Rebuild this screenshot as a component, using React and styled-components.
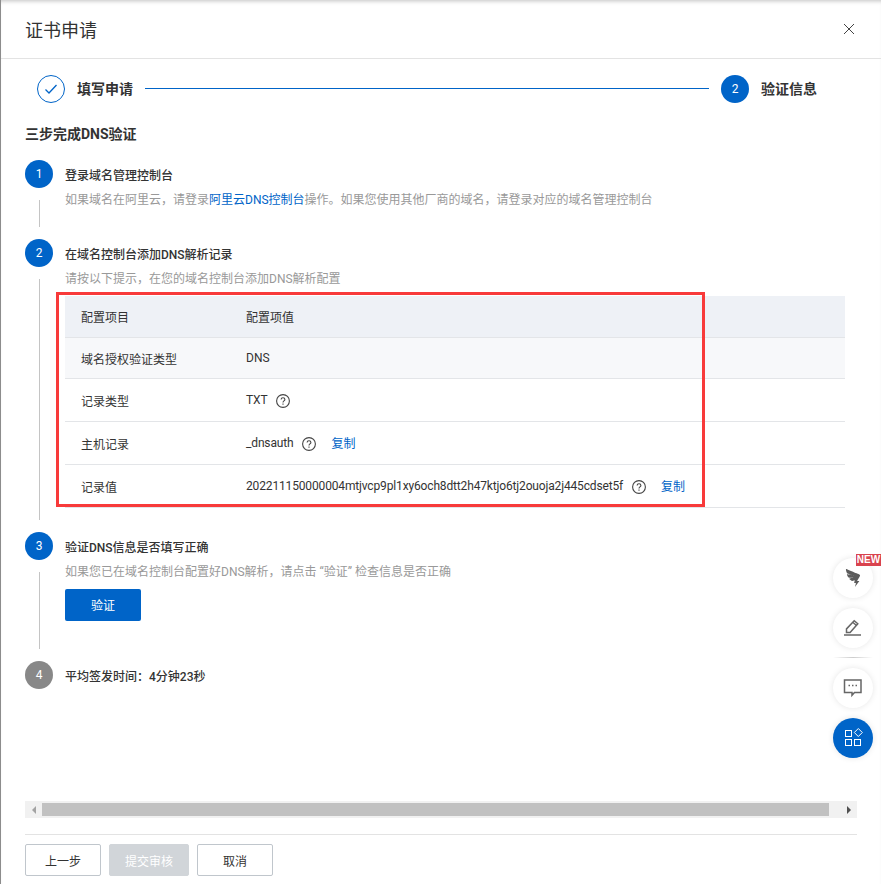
import styled, { createGlobalStyle } from 'styled-components'
import { AiOutlineDingding } from 'react-icons/ai'

const GlobalStyle = createGlobalStyle`
    html, body {
        margin: 0;
        padding: 0;
        background: #fff;
    }
    body {
        font-family: Roboto, 'Noto Sans CJK SC', sans-serif;
        font-size: 12px;
        color: #333;
    }
    * {
        box-sizing: border-box;
    }
`

const Drawer = styled.div`
    position: relative;
    width: 881px;
    height: 884px;
    display: flex;
    flex-direction: column;
    overflow: hidden;
    background: #fff;
    border-left: 1px solid #8c8c8c;
    box-shadow: inset 0 4px 4px -3px rgba(0, 0, 0, 0.25);
`

const Header = styled.header`
    height: 59px;
    flex: none;
    display: flex;
    align-items: center;
    justify-content: space-between;
    padding: 0 26px 1px 24px;
    border-bottom: 1px solid #e3e3e3;
`

const Title = styled.h1`
    margin: 0;
    font-size: 18px;
    font-weight: 400;
    color: #333;
`

const Stepper = styled.div`
    display: flex;
    align-items: center;
    column-gap: 12px;
    padding: 16px 64px 0 36px;
`

const StepperLine = styled.div`
    flex: 1;
    height: 1px;
    margin-bottom: 1px;
    background: #0064c8;
`

const StepperLabel = styled.span`
    font-size: 14px;
    line-height: 28px;
    font-weight: 700;
    color: #333;
`

const Circle = styled.div`
    width: 28px;
    height: 28px;
    flex: none;
    display: flex;
    align-items: center;
    justify-content: center;
    border-radius: 50%;
    font-size: 12px;
    color: ${({ $outline }) => ($outline ? '#0064c8' : '#fff')};
    background: ${({ $outline, $muted }) => ($outline ? '#fff' : $muted ? '#888' : '#0064c8')};
    border: ${({ $outline }) => ($outline ? '1px solid #0064c8' : 'none')};
`

const Content = styled.main`
    flex: 1;
    min-height: 0;
    padding: 21px 12px 0 24px;
`

const SectionTitle = styled.h2`
    margin: 0 0 16px;
    font-size: 14px;
    line-height: 20px;
    font-weight: 700;
    color: #333;
`

const Step = styled.section`
    display: flex;
    column-gap: 12px;
    padding-bottom: ${({ $gap }) => $gap}px;
`

const Rail = styled.div`
    width: 28px;
    flex: none;
    display: flex;
    flex-direction: column;
    align-items: center;
`

const RailLine = styled.div`
    flex: 1;
    width: 1px;
    margin: 12px 0 -${({ $gap }) => $gap - 12}px;
    background: #c4c4c4;
`

const StepBody = styled.div`
    flex: 1;
    min-width: 0;
    padding-top: 6px;
`

const StepTitle = styled.div`
    font-size: 12px;
    line-height: 20px;
    font-weight: 500;
    color: #333;
`

const StepDesc = styled.div`
    margin-top: 4px;
    font-size: 12px;
    line-height: 20px;
    color: #999;
`

const DocLink = styled.a`
    color: #0064c8;
    text-decoration: none;
`

const TableWrap = styled.div`
    position: relative;
    margin-top: 7px;
`

const RedFrame = styled.div`
    position: absolute;
    top: -4px;
    left: -9px;
    width: 649px;
    height: 215px;
    border: 3px solid #f83a3a;
    pointer-events: none;
`

const Table = styled.table`
    width: 780px;
    border-collapse: collapse;
    table-layout: fixed;
    font-size: 12px;
    color: #333;

    th, td {
        padding: 1px 0 0 16px;
        text-align: left;
        font-weight: 400;
        border-bottom: 1px solid #e3e5e8;
        white-space: nowrap;
    }

    th {
        height: 41px;
        background: #eef1f6;
    }

    tbody tr:first-child td {
        height: 41px;
        background: #f7f8fa;
    }

    td {
        height: 43px;
    }
`

const FirstCol = styled.col`
    width: 165px;
`

const CellRow = styled.div`
    display: flex;
    align-items: center;
    column-gap: 9px;
`

const Value = styled.span`
    letter-spacing: -0.15px;
`

const CopyLink = styled.a`
    color: #0064c8;
    margin: 0 0 2px 6px;
    text-decoration: none;
`

const HelpIcon = styled.svg`
    width: 14px;
    height: 14px;
    margin-top: 2px;
    flex: none;
    color: #444;
`

const PrimaryButton = styled.button`
    display: block;
    width: 76px;
    height: 32px;
    margin-top: 7px;
    border: none;
    border-radius: 2px;
    background: #0064c8;
    color: #fff;
    font: inherit;
`

const ScrollBar = styled.div`
    height: 17px;
    flex: none;
    margin: 0 24px 16px 24px;
    display: flex;
    align-items: center;
    background: #f1f1f1;
`

const ScrollEnd = styled.div`
    width: 17px;
    height: 17px;
    flex: none;
    display: flex;
    align-items: center;
    justify-content: center;
`

const ArrowLeft = styled.div`
    width: 0;
    height: 0;
    border-style: solid;
    border-width: 4px 4px 4px 0;
    border-color: transparent #a3a3a3 transparent transparent;
`

const ArrowRight = styled.div`
    width: 0;
    height: 0;
    border-style: solid;
    border-width: 4px 0 4px 4px;
    border-color: transparent transparent transparent #505050;
`

const ScrollTrack = styled.div`
    flex: 1;
    height: 13px;
    margin-right: 11px;
    background: #c1c1c1;
`

const Footer = styled.footer`
    flex: none;
    height: 50px;
    margin: 0 24px;
    padding-top: 9px;
    display: flex;
    align-items: flex-start;
    column-gap: 8px;
    border-top: 1px solid #e3e3e3;
`

const FooterButton = styled.button`
    width: ${({ $wide }) => ($wide ? 80 : 76)}px;
    height: 32px;
    border: 1px solid ${({ $disabled }) => ($disabled ? '#d1d5d9' : '#c0c6cc')};
    border-radius: 2px;
    background: ${({ $disabled }) => ($disabled ? '#d1d5d9' : '#fff')};
    color: ${({ $disabled }) => ($disabled ? '#fff' : '#333')};
    font: inherit;
`

const FloatPanel = styled.aside`
    position: absolute;
    top: 558px;
    left: 832px;
    width: 40px;
    display: flex;
    flex-direction: column;
    row-gap: 10px;
`

const FloatButton = styled.div`
    position: relative;
    width: 40px;
    height: 40px;
    display: flex;
    align-items: center;
    justify-content: center;
    border-radius: 50%;
    color: #5c5c5c;
    background: ${({ $primary }) => ($primary ? '#0064c8' : '#fff')};
    box-shadow: 0 0 6px rgba(0, 0, 0, 0.1);
`

const FloatDivider = styled.div`
    height: 1px;
    margin-top: -1px;
    background: linear-gradient(90deg, #fff, #ccc, #fff);
`

const NewBadge = styled.span`
    position: absolute;
    top: -4px;
    left: 23px;
    width: 25px;
    height: 12px;
    background: #d9434e;
    color: #fff;
    font-family: 'Liberation Sans', sans-serif;
    font-size: 10px;
    font-weight: 700;
    line-height: 12px;
    text-align: center;
`

const Help = () => (
    <HelpIcon viewBox="0 0 14 14" fill="none" stroke="currentColor" strokeWidth="1.100">
        <circle cx="7" cy="7" r="6.400" />
        <path d="M5.100 5.500c0-1.100.8-1.800 1.900-1.800s1.900.7 1.900 1.700c0 1.500-1.900 1.500-1.900 3" />
        <path d="M7 9.500v1.200" />
    </HelpIcon>
)

const records = [
    { label: '记录类型', value: 'TXT', copy: false },
    { label: '主机记录', value: '_dnsauth', copy: true },
    {
        label: '记录值',
        value: '202211150000004mtjvcp9pl1xy6och8dtt2h47ktjo6tj2ouoja2j445cdset5f',
        copy: true,
    },
]

function App() {
    return (
        <Drawer>
            <GlobalStyle />
            <Header>
                <Title>证书申请</Title>
                <svg width="12" height="12" viewBox="0 0 12 12" fill="none" stroke="#444" strokeWidth="1">
                    <path d="M1 1l10 10M11 1L1 11" />
                </svg>
            </Header>

            <Stepper>
                <Circle $outline>
                    <svg width="14" height="12" viewBox="0 0 14 12" fill="none" stroke="#0064c8" strokeWidth="1.300">
                        <path d="M1.500 6.500l3.500 3.500 7.500-8" />
                    </svg>
                </Circle>
                <StepperLabel>填写申请</StepperLabel>
                <StepperLine />
                <Circle>2</Circle>
                <StepperLabel>验证信息</StepperLabel>
            </Stepper>

            <Content>
                <SectionTitle>三步完成DNS验证</SectionTitle>

                <Step $gap={29}>
                    <Rail>
                        <Circle>1</Circle>
                        <RailLine $gap={29} />
                    </Rail>
                    <StepBody>
                        <StepTitle>登录域名管理控制台</StepTitle>
                        <StepDesc>
                            如果域名在阿里云，请登录<DocLink>阿里云DNS控制台</DocLink>操作。如果您使用其他厂商的域名，请登录对应的域名管理控制台
                        </StepDesc>
                    </StepBody>
                </Step>

                <Step $gap={24}>
                    <Rail>
                        <Circle>2</Circle>
                        <RailLine $gap={24} />
                    </Rail>
                    <StepBody>
                        <StepTitle>在域名控制台添加DNS解析记录</StepTitle>
                        <StepDesc>请按以下提示，在您的域名控制台添加DNS解析配置</StepDesc>
                        <TableWrap>
                            <Table>
                                <colgroup>
                                    <FirstCol />
                                    <col />
                                </colgroup>
                                <thead>
                                    <tr>
                                        <th>配置项目</th>
                                        <th>配置项值</th>
                                    </tr>
                                </thead>
                                <tbody>
                                    <tr>
                                        <td>域名授权验证类型</td>
                                        <td>DNS</td>
                                    </tr>
                                    {records.map(({ label, value, copy }) => (
                                        <tr key={label}>
                                            <td>{label}</td>
                                            <td>
                                                <CellRow>
                                                    <Value>{value}</Value>
                                                    <Help />
                                                    {copy && <CopyLink>复制</CopyLink>}
                                                </CellRow>
                                            </td>
                                        </tr>
                                    ))}
                                </tbody>
                            </Table>
                            <RedFrame />
                        </TableWrap>
                    </StepBody>
                </Step>

                <Step $gap={40}>
                    <Rail>
                        <Circle>3</Circle>
                        <RailLine $gap={40} />
                    </Rail>
                    <StepBody>
                        <StepTitle>验证DNS信息是否填写正确</StepTitle>
                        <StepDesc>如果您已在域名控制台配置好DNS解析，请点击 “验证” 检查信息是否正确</StepDesc>
                        <PrimaryButton>验证</PrimaryButton>
                    </StepBody>
                </Step>

                <Step $gap={0}>
                    <Rail>
                        <Circle $muted>4</Circle>
                    </Rail>
                    <StepBody>
                        <StepTitle>平均签发时间：4分钟23秒</StepTitle>
                    </StepBody>
                </Step>
            </Content>

            <ScrollBar>
                <ScrollEnd>
                    <ArrowLeft />
                </ScrollEnd>
                <ScrollTrack />
                <ScrollEnd>
                    <ArrowRight />
                </ScrollEnd>
            </ScrollBar>

            <Footer>
                <FooterButton>上一步</FooterButton>
                <FooterButton $wide $disabled>提交审核</FooterButton>
                <FooterButton>取消</FooterButton>
            </Footer>

            <FloatPanel>
                <FloatButton>
                    <AiOutlineDingding size={22} />
                    <NewBadge>NEW</NewBadge>
                </FloatButton>
                <FloatButton>
                    <svg width="20" height="20" viewBox="0 0 20 20" fill="none" stroke="#666" strokeWidth="1.500">
                        <path d="M1 17h17" />
                        <path d="M3.500 14.500v-3.600l7.700-8.200 3.600 3.100-7.700 8.700z" />
                        <path d="M10 4.500l3.500 3" />
                    </svg>
                </FloatButton>
                <FloatDivider />
                <FloatButton>
                    <svg width="20" height="20" viewBox="0 0 20 20" fill="none" stroke="#666" strokeWidth="1.500">
                        <path d="M1.500 2h16.500v12.500h-6.500l-2.500 2.800v-2.800h-7.500z" />
                        <path d="M5.500 7.500h1.500M9 7.500h1.500M12.500 7.500h1.500" />
                    </svg>
                </FloatButton>
                <FloatButton $primary>
                    <svg width="20" height="20" viewBox="0 0 20 20" fill="none" stroke="#fff" strokeWidth="1">
                        <rect x="2.500" y="2.500" width="6" height="6" />
                        <rect x="2.500" y="11.500" width="6" height="6" />
                        <rect x="11.500" y="11.500" width="6" height="6" />
                        <path d="M15.300.5l4 4-4 4-4-4z" />
                    </svg>
                </FloatButton>
            </FloatPanel>
        </Drawer>
    )
}

export default App
